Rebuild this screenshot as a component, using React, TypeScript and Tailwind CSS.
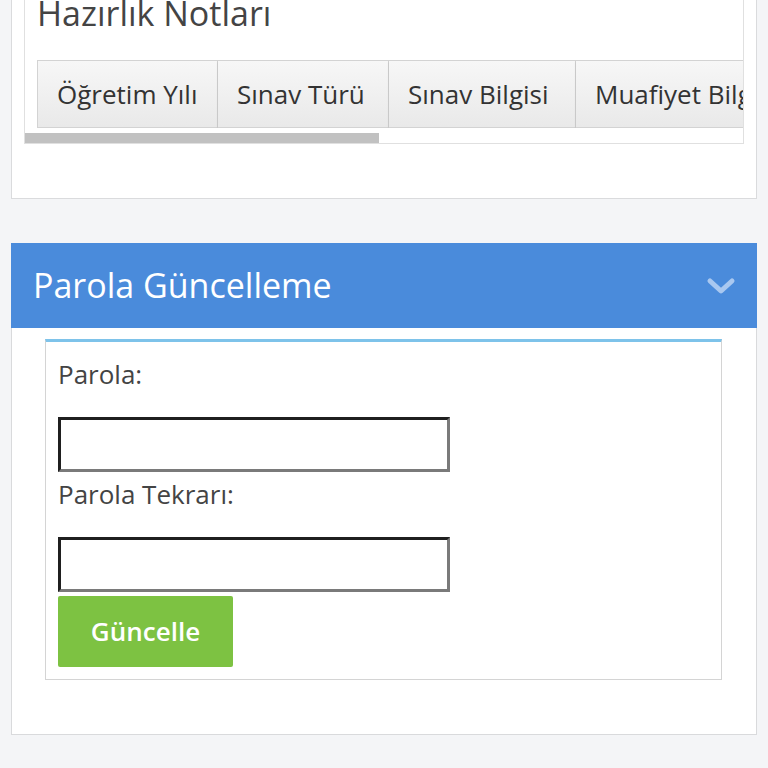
const tabs = [
  { label: "Öğretim Yılı", w: "w-[181px]" },
  { label: "Sınav Türü", w: "w-[171px]" },
  { label: "Sınav Bilgisi", w: "w-[187px]" },
  { label: "Muafiyet Bilgisi", w: "w-[210px]" },
];

const inputCls =
  "block h-[55px] w-[392px] border-[3px] border-t-[#1f1f1f] border-l-[#1f1f1f] border-b-[#7a7a7a] border-r-[#7a7a7a] bg-white outline-none";

export default function App() {
  return (
    <div className="h-[768px] overflow-hidden bg-[#f4f5f7] px-[11px] font-['Open_Sans','Noto_Sans',sans-serif] text-[#444]">
      {/* üst panel: sayfa kaydırılmış, başlık kesik */}
      <div className="border border-t-0 border-[#dadbdd] bg-white px-[12px] pb-[54px]">
        <div className="border border-t-0 border-[#e0e0e0]">
          <h2 className="-mt-[7px] pl-[12px] text-[34px] leading-[40px] text-[#444]">Hazırlık Notları</h2>
          <div className="mt-[27px] ml-[12px] flex overflow-hidden whitespace-nowrap">
            {tabs.map((t, i) => (
              <div
                key={t.label}
                className={`${t.w} shrink-0 h-[68px] flex items-center pl-[19px] border border-[#d3d3d3] ${i > 0 ? "border-l-0" : ""} bg-gradient-to-b from-[#f7f7f7] to-[#e9e9e9] shadow-[0_2px_2px_rgba(0,0,0,0.15)] text-[26px] text-[#333]`}
              >
                {t.label}
              </div>
            ))}
          </div>
          <div className="mt-[5px] h-[10px] w-[354px] bg-[#c1c1c1]" />
        </div>
      </div>

      {/* parola güncelleme paneli */}
      <div className="mt-[44px] border border-[#d9dadc] bg-white pb-[54px]">
        <div className="-mx-px -mt-px flex h-[85px] items-center justify-between bg-[#4a8bdb] pl-[22px] pr-[21px]">
          <span className="text-[34px] text-white">Parola Güncelleme</span>
          <svg width="30" height="18" viewBox="0 0 30 18" fill="none">
            <polyline
              points="4,4 15,14 26,4"
              stroke="#a9c8f0"
              strokeWidth="5"
              strokeLinecap="round"
              strokeLinejoin="round"
            />
          </svg>
        </div>
        <div className="mt-[11px] ml-[33px] mr-[34px] border border-t-[3px] border-[#d4d4d4] border-t-[#7ec3ea] px-[12px] pt-[14px] pb-[12px]">
          <label className="block text-[26px] leading-[36px] text-[#444]">Parola:</label>
          <input type="password" className={`${inputCls} mt-[25px]`} />
          <label className="mt-[4px] block text-[26px] leading-[36px] text-[#444]">Parola Tekrarı:</label>
          <input type="password" className={`${inputCls} mt-[25px]`} />
          <button className="mt-[4px] h-[71px] w-[175px] rounded-[2px] bg-[#7dc242] text-[26px] font-semibold text-white">
            Güncelle
          </button>
        </div>
      </div>
    </div>
  );
}
